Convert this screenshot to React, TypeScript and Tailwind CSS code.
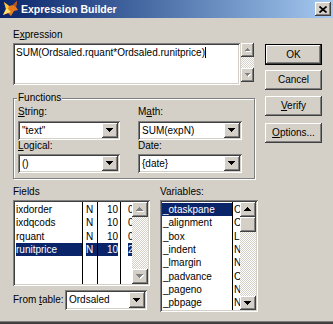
import React from "react";

const raised =
  "bg-[#d4d0c8] shadow-[inset_-1px_-1px_#404040,inset_1px_1px_#ffffff,inset_-2px_-2px_#808080,inset_2px_2px_#d4d0c8]";
const sunken =
  "shadow-[inset_1px_1px_#808080,inset_-1px_-1px_#ffffff,inset_2px_2px_#404040,inset_-2px_-2px_#d4d0c8]";
const dither =
  "bg-[image:repeating-conic-gradient(#ffffff_0%_25%,#d4d0c8_0%_50%)] bg-[length:2px_2px]";

function Arrow({ up = false, disabled = false, small = false }: { up?: boolean; disabled?: boolean; small?: boolean }) {
  const rows = small ? [5, 3, 1] : [7, 5, 3, 1];
  const w = rows[0];
  const h = rows.length;
  const tri = (dx: number, dy: number, fill: string) =>
    rows.map((rw, i) => (
      <rect
        key={fill + i}
        x={dx + (w - rw) / 2}
        y={dy + (up ? h - 1 - i : i)}
        width={rw}
        height={1}
        fill={fill}
      />
    ));
  return (
    <svg width={w + 1} height={h + 1} viewBox={`0 0 ${w + 1} ${h + 1}`} shapeRendering="crispEdges">
      {disabled && tri(1, 1, "#ffffff")}
      {tri(0, 0, disabled ? "#808080" : "#000000")}
    </svg>
  );
}

function Combo({ value, className = "" }: { value: string; className?: string }) {
  return (
    <div className={`flex h-[19px] bg-white p-[2px] ${sunken} ${className}`}>
      <div className="flex-1 pl-[2px] leading-[15px] whitespace-nowrap overflow-hidden">{value}</div>
      <div className={`w-[16px] flex items-center justify-center ${raised}`}>
        <Arrow />
      </div>
    </div>
  );
}

function Btn({ children, def = false }: { children: React.ReactNode; def?: boolean }) {
  if (def) {
    return (
      <div className="h-[21px] w-[57px] border border-black flex">
        <div className={`flex-1 flex items-center justify-center ${raised}`}>{children}</div>
      </div>
    );
  }
  return <div className={`h-[20px] w-[57px] flex items-center justify-center ${raised}`}>{children}</div>;
}

const fields = [
  { name: "ixdorder", type: "N", len: "10", dec: "0" },
  { name: "ixdqcods", type: "N", len: "10", dec: "0" },
  { name: "rquant", type: "N", len: "10", dec: "0" },
  { name: "runitprice", type: "N", len: "10", dec: "2" },
];

const variables = [
  { name: "_otaskpane", type: "O" },
  { name: "_alignment", type: "C" },
  { name: "_box", type: "L" },
  { name: "_indent", type: "N" },
  { name: "_lmargin", type: "N" },
  { name: "_padvance", type: "C" },
  { name: "_pageno", type: "N" },
  { name: "_pbpage", type: "N" },
];

function FoxIcon() {
  return (
    <svg width="16" height="16" viewBox="0 0 16 16">
      <polygon points="1,1 6,5 10,4 14,0 13,6 15,9 11,10 8,15 5,12 0,14 3,8" fill="#e8781c" />
      <polygon points="1,1 6,5 5,8 3,8" fill="#f8c838" />
      <polygon points="3,8 5,8 8,11 5,12 0,14" fill="#fce070" />
      <polygon points="10,4 14,0 13,6" fill="#c05010" />
    </svg>
  );
}

export default function App() {
  return (
    <div className="w-[333px] h-[324px] bg-[#d4d0c8] flex flex-col overflow-hidden font-['Liberation_Sans',Arial,sans-serif] text-[10px] leading-[12px] text-black">
      {/* title bar */}
      <div className="h-[18px] flex items-center bg-linear-to-r from-[#0a246a] to-[#a6caf0]">
        <div className="ml-[3px] w-[16px] h-[16px]">
          <FoxIcon />
        </div>
        <div className="ml-[2px] flex-1 text-white font-bold text-[10.5px] leading-[14px]">Expression Builder</div>
        <div className={`mr-[2px] w-[16px] h-[14px] flex items-center justify-center ${raised}`}>
          <svg width="8" height="7" viewBox="0 0 8 7">
            <path d="M0.5 0.5L7.5 6.5M7.5 0.5L0.5 6.5" stroke="#000" strokeWidth="1.7" />
          </svg>
        </div>
      </div>

      {/* body */}
      <div className="flex-1 flex pl-[13px]">
        <div className="w-[245px] flex flex-col">
          <div className="mt-[11px] h-[12px]">
            E<span className="underline">x</span>pression
          </div>
          <div className="mt-[2px] flex h-[42px]">
            <div className={`w-[227px] bg-white p-[2px] ${sunken}`}>
              <div className="pl-[1px] pt-[2px] whitespace-nowrap">
                SUM(Ordsaled.rquant*Ordsaled.runitprice)
                <span className="inline-block w-[1px] h-[11px] bg-black align-[-2px]" />
              </div>
            </div>
            <div className="ml-[1px] w-[13px] h-[39px] flex flex-col">
              <div className={`h-[14px] flex items-center justify-center ${raised}`}>
                <Arrow up disabled small />
              </div>
              <div className={`flex-1 ${dither}`} />
              <div className={`h-[14px] flex items-center justify-center ${raised}`}>
                <Arrow disabled small />
              </div>
            </div>
          </div>

          {/* functions group */}
          <div className="mt-[13px] w-[242px] h-[81px] border border-[#808080] shadow-[inset_1px_1px_#ffffff,1px_1px_#ffffff] flex flex-col">
            <div className="-mt-[7px] ml-[3px] px-[1px] w-fit h-[12px] bg-[#d4d0c8]">Functions</div>
            <div className="mt-[2px] pl-[4px] grid grid-cols-[102px_104px] gap-x-[18px]">
              <div className="h-[12px]">
                <span className="underline">S</span>tring:
              </div>
              <div className="h-[12px]">
                M<span className="underline">a</span>th:
              </div>
              <Combo value={'"text"'} className="mt-[3px]" />
              <Combo value="SUM(expN)" className="mt-[3px]" />
              <div className="h-[12px]">
                <span className="underline">L</span>ogical:
              </div>
              <div className="h-[12px]">Date:</div>
              <Combo value="()" className="mt-[2px]" />
              <Combo value="{date}" className="mt-[2px]" />
            </div>
          </div>

          {/* fields & variables */}
          <div className="mt-[7px] flex">
            <div className="w-[137px] flex flex-col">
              <div className="h-[12px]">Fields</div>
              <div className={`mt-[2px] h-[86px] bg-white p-[2px] flex ${sunken}`}>
                <div className="flex-1 flex overflow-hidden">
                  {[
                    { w: "w-[68px]", key: "name" as const, cls: "pl-[1px] border-r border-black" },
                    { w: "w-[15px]", key: "type" as const, cls: "pl-[3px] border-r border-black" },
                    { w: "w-[23px]", key: "len" as const, cls: "text-right pr-[2px] border-r border-black" },
                    { w: "flex-1", key: "dec" as const, cls: "pl-[7px]" },
                  ].map((col) => (
                    <div key={col.key} className={`${col.w} ${col.cls} pt-[1px] flex flex-col whitespace-nowrap overflow-hidden`}>
                      {fields.map((f, i) => (
                        <div
                          key={f.name}
                          className={`h-[13.33px] leading-[13px] ${i === 3 ? "bg-[#0a246a] text-white" : ""}`}
                        >
                          {f[col.key]}
                        </div>
                      ))}
                    </div>
                  ))}
                </div>
                <div className="w-[16px] flex flex-col">
                  <div className={`h-[15px] flex items-center justify-center ${raised}`}>
                    <Arrow up disabled />
                  </div>
                  <div className={`flex-1 ${dither}`} />
                  <div className={`h-[15px] flex items-center justify-center ${raised}`}>
                    <Arrow disabled />
                  </div>
                </div>
              </div>
              <div className="mt-[4px] h-[20px] flex items-center">
                <div className="w-[52px]">
                  From <span className="underline">t</span>able:
                </div>
                <Combo value="Ordsaled" className="w-[82px] h-[20px]" />
              </div>
            </div>

            <div className="ml-[10px] w-[98px] flex flex-col">
              <div className="h-[12px]">Variables:</div>
              <div className={`mt-[2px] h-[112px] bg-white p-[2px] flex ${sunken}`}>
                <div className="w-[71px] border-r border-black pt-[1px] flex flex-col whitespace-nowrap overflow-hidden">
                  {variables.map((v, i) => (
                    <div
                      key={v.name}
                      className={`h-[13.33px] leading-[13px] pl-[1px] ${i === 0 ? "bg-[#0a246a] text-white" : ""}`}
                    >
                      {v.name}
                    </div>
                  ))}
                </div>
                <div className="flex-1 pt-[1px] pl-[1px] flex flex-col overflow-hidden">
                  {variables.map((v) => (
                    <div key={v.name} className="h-[13.33px] leading-[13px]">
                      {v.type}
                    </div>
                  ))}
                </div>
                <div className="w-[16px] flex flex-col">
                  <div className={`h-[15px] flex items-center justify-center ${raised}`}>
                    <Arrow up />
                  </div>
                  <div className={`h-[15px] ${raised}`} />
                  <div className={`flex-1 ${dither}`} />
                  <div className={`h-[14px] flex items-center justify-center ${raised}`}>
                    <Arrow />
                  </div>
                </div>
              </div>
            </div>
          </div>
        </div>

        {/* buttons */}
        <div className="ml-[7px] w-[57px] flex flex-col">
          <div className="mt-[26px]">
            <Btn def>OK</Btn>
          </div>
          <div className="mt-[5px]">
            <Btn>Cancel</Btn>
          </div>
          <div className="mt-[6px]">
            <Btn>
              <span>
                <span className="underline">V</span>erify
              </span>
            </Btn>
          </div>
          <div className="mt-[7px]">
            <Btn>
              <span>
                <span className="underline">O</span>ptions...
              </span>
            </Btn>
          </div>
        </div>
      </div>

      {/* bottom frame */}
      <div className="h-[3px] border-t border-[#808080] bg-[#404040]" />
    </div>
  );
}
